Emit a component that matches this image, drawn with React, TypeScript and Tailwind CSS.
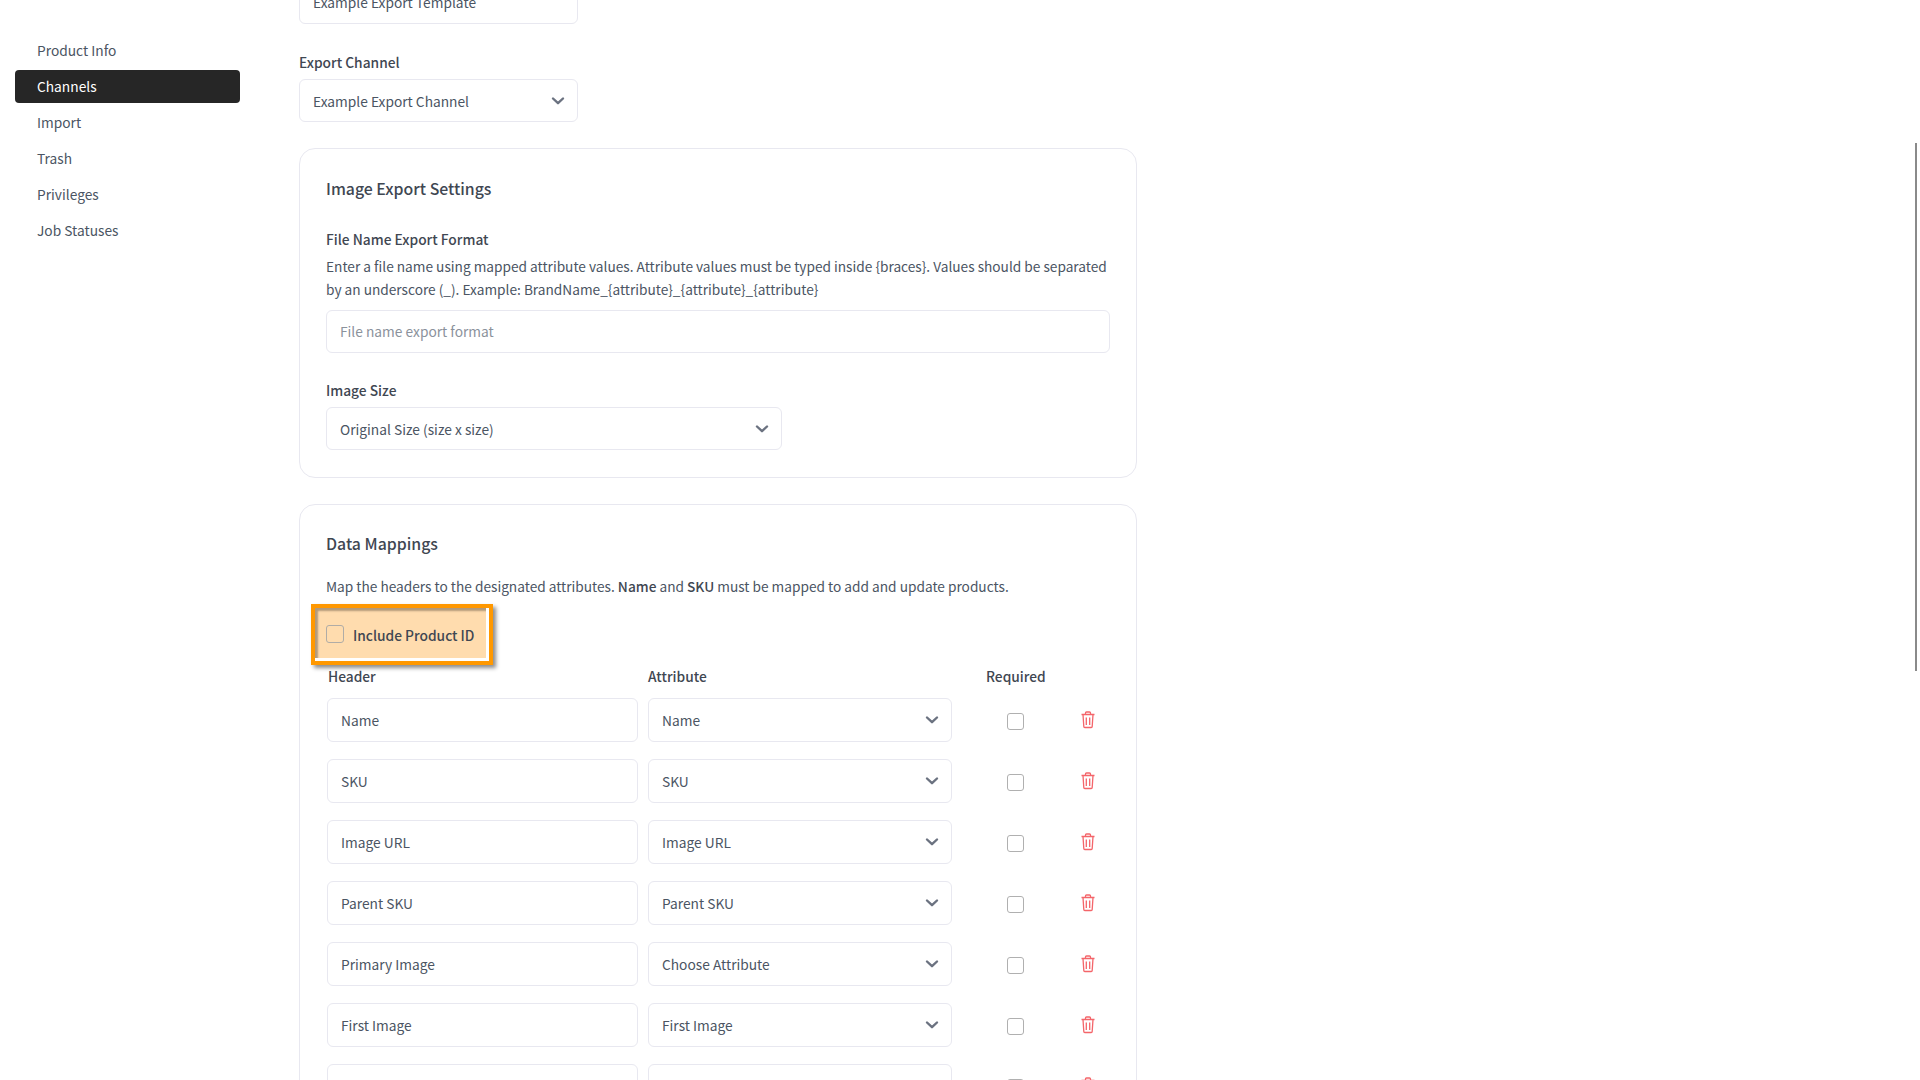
import React from 'react';

const navItems = ['Product Info', 'Channels', 'Import', 'Trash', 'Privileges', 'Job Statuses'];

const mappings = [
  { header: 'Name', attribute: 'Name' },
  { header: 'SKU', attribute: 'SKU' },
  { header: 'Image URL', attribute: 'Image URL' },
  { header: 'Parent SKU', attribute: 'Parent SKU' },
  { header: 'Primary Image', attribute: 'Choose Attribute' },
  { header: 'First Image', attribute: 'First Image' },
  { header: '', attribute: '' },
];

const Chevron = () => (
  <svg className="w-[14px] h-[14px] shrink-0" viewBox="0 0 14 14" fill="none" stroke="#6b7280" strokeWidth={2.4}>
    <path d="M2 4.5 7 9.2l5-4.7" strokeLinecap="round" strokeLinejoin="round" />
  </svg>
);

const TrashIcon = () => (
  <svg className="w-[16px] h-[18px]" viewBox="0 0 16 18" fill="none" stroke="#f4656a" strokeWidth={1.3}>
    <path d="M1.5 3.5h13M5.5 3.5V2a1 1 0 0 1 1-1h3a1 1 0 0 1 1 1v1.5M3 3.5l.8 12a1 1 0 0 0 1 1h6.4a1 1 0 0 0 1-1l.8-12M6.3 6.5v7.5M9.7 6.5v7.5" />
  </svg>
);

const Field = ({ value, placeholder, className }: { value?: string; placeholder?: string; className: string }) => (
  <input
    readOnly
    value={value}
    placeholder={placeholder}
    className={`px-[13px] pb-[1px] rounded-[6px] border border-[#e8e8f0] bg-white text-[13.75px] text-[#4b5563] placeholder:text-[#8b929c] outline-none ${className}`}
  />
);

const SelectBox = ({ value, className }: { value: string; className: string }) => (
  <div className={`pl-[13px] pr-[12px] rounded-[6px] border border-[#e8e8f0] bg-white flex items-center justify-between text-[13.75px] text-[#4b5563] ${className}`}>
    <span>{value}</span>
    <Chevron />
  </div>
);

const App: React.FC = () => {
  return (
    <div className="relative h-screen w-full overflow-hidden bg-white flex font-['Noto_Sans_CJK_SC',sans-serif] text-[#4b5563] text-[13.75px] leading-[24px]">
      {/* Sidebar */}
      <aside className="w-[299px] shrink-0 pl-[15px] pt-[34px] flex flex-col gap-[3px]">
        {navItems.map((item) => (
          <div
            key={item}
            className={`w-[225px] h-[33px] pl-[22px] pb-[1px] flex items-center rounded-[4px] ${item === 'Channels' ? 'bg-[#262626] text-white' : ''}`}
          >
            {item}
          </div>
        ))}
      </aside>

      {/* Form */}
      <main className="w-[838px] shrink-0 -mt-[19px]">
        <Field value="Example Export Template" className="h-[43px] w-[279px] block" />
        <label className="block mt-[26px] font-medium text-[#3f4752]">Export Channel</label>
        <SelectBox value="Example Export Channel" className="h-[43px] w-[279px] mt-[5px]" />

        {/* Image Export Settings */}
        <section className="mt-[26px] border border-[#e8e8f0] rounded-[16px] px-[26px] pt-[26px] pb-[27px]">
          <h2 className="text-[15.85px] leading-[28px] font-medium text-[#3f4752]">Image Export Settings</h2>
          <label className="block mt-[24px] font-medium text-[#3f4752]">File Name Export Format</label>
          <p className="leading-[23px] mt-[4px] text-[13.68px] whitespace-nowrap">
            Enter a file name using mapped attribute values. Attribute values must be typed inside {'{braces}'}. Values should be separated
            <br />
            by an underscore (_). Example: BrandName_{'{attribute}'}_{'{attribute}'}_{'{attribute}'}
          </p>
          <Field placeholder="File name export format" className="h-[43px] w-full block mt-[9px]" />
          <label className="block mt-[25px] font-medium text-[#3f4752]">Image Size</label>
          <SelectBox value="Original Size (size x size)" className="h-[43px] w-[456px] mt-[5px]" />
        </section>

        {/* Data Mappings */}
        <section className="mt-[26px] border border-[#e8e8f0] rounded-[16px] px-[26px] pt-[25px] h-[700px]">
          <h2 className="text-[15.85px] leading-[28px] font-medium text-[#3f4752]">Data Mappings</h2>
          <p className="leading-[23px] mt-[17px] text-[13.68px] whitespace-nowrap">
            Map the headers to the designated attributes. <b className="font-medium text-[#3f4752]">Name</b> and{' '}
            <b className="font-medium text-[#3f4752]">SKU</b> must be mapped to add and update products.
          </p>

          {/* Highlighted checkbox */}
          <div className="relative z-10 mt-[6px] -ml-[15px] w-[182px] h-[61px] border-[4px] border-[#ff9800] bg-white shadow-[3px_3px_4px_rgba(0,0,0,0.45)]">
            <div className="h-[50px] w-[171px] pt-[2px] bg-[#ffdcae] shadow-[inset_3px_3px_2px_rgba(0,0,0,0.3)] flex items-center pl-[11px]">
              <span className="w-[18px] h-[18px] rounded-[3px] border border-[#b0aca6] shrink-0" />
              <span className="ml-[9px] pt-[2px] font-medium text-[#3f4752]">Include Product ID</span>
            </div>
          </div>

          <div className="flex ml-[2px] -mt-[1px] font-medium text-[#3f4752]">
            <span className="w-[320px]">Header</span>
            <span className="w-[338px]">Attribute</span>
            <span>Required</span>
          </div>

          <div className="mt-[10px] ml-[1px] flex flex-col gap-[17px]">
            {mappings.map((row, i) => (
              <div key={i} className="flex items-center">
                <Field value={row.header} className="h-[44px] w-[311px]" />
                <SelectBox value={row.attribute} className="h-[44px] w-[304px] ml-[10px]" />
                <span className="ml-[55px] w-[17px] h-[17px] mt-[3px] rounded-[3px] border border-[#b0b0b0] shrink-0" />
                <span className="ml-[56px]"><TrashIcon /></span>
              </div>
            ))}
          </div>
        </section>
      </main>

      {/* Scrollbar thumb */}
      <div className="absolute right-[3px] top-[143px] h-[528px] w-[2px] bg-[#8a8a8a]" />
    </div>
  );
};

export default App;
